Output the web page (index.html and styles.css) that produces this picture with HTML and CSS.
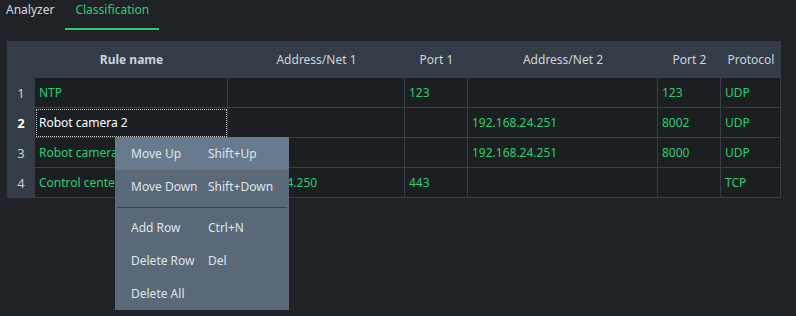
FILE: index.html
```html
<!DOCTYPE html>
<html lang="en">
<head>
    <meta charset="UTF-8">
    <meta name="viewport" content="width=device-width, initial-scale=1.0">
    <title>Classification</title>
    <link rel="stylesheet" href="styles.css">
</head>
<body>
    <div class="tabs">
        <div class="tab">Analyzer</div>
        <div class="tab active">Classification</div>
    </div>

    <div class="rules">
        <!-- header -->
        <div class="hd"></div>
        <div class="hd bold">Rule name</div>
        <div class="hd">Address/Net 1</div>
        <div class="hd">Port 1</div>
        <div class="hd">Address/Net 2</div>
        <div class="hd">Port 2</div>
        <div class="hd">Protocol</div>

        <div class="num">1</div>
        <div class="cell">NTP</div>
        <div class="cell"></div>
        <div class="cell">123</div>
        <div class="cell"></div>
        <div class="cell">123</div>
        <div class="cell">UDP</div>

        <div class="num current">2</div>
        <div class="cell focus">Robot camera 2</div>
        <div class="cell"></div>
        <div class="cell"></div>
        <div class="cell">192.168.24.251</div>
        <div class="cell">8002</div>
        <div class="cell">UDP</div>

        <div class="num">3</div>
        <div class="cell">Robot camera 1</div>
        <div class="cell"></div>
        <div class="cell"></div>
        <div class="cell">192.168.24.251</div>
        <div class="cell">8000</div>
        <div class="cell">UDP</div>

        <div class="num">4</div>
        <div class="cell">Control center</div>
        <div class="cell">192.168.24.250</div>
        <div class="cell">443</div>
        <div class="cell"></div>
        <div class="cell"></div>
        <div class="cell">TCP</div>
    </div>

    <!-- context menu -->
    <div class="menu">
        <div class="item hover"><span>Move Up</span><span>Shift+Up</span></div>
        <div class="item"><span>Move Down</span><span>Shift+Down</span></div>
        <div class="sep"></div>
        <div class="item"><span>Add Row</span><span>Ctrl+N</span></div>
        <div class="item"><span>Delete Row</span><span>Del</span></div>
        <div class="item"><span>Delete All</span><span></span></div>
    </div>
</body>
</html>
```

FILE: styles.css
```css
body {
    margin: 0;
    background: #1f2327;
    color: #d4dae0;
    font-family: "Noto Sans", "Open Sans", sans-serif;
    font-size: 12px;
    height: 316px;
    overflow: hidden;
}
/* tab bar */
.tabs {
    display: flex;
    gap: 5px;
    height: 30px;
}
.tab {
    padding: 0 6px;
    line-height: 20px;
    color: #d4dae0;
}
.tab.active {
    padding: 0 10px;
    color: #2ecc71;
    border-bottom: 2px solid #2ecc71;
    height: 28px;
    box-sizing: border-box;
    height: 30px;
}
/* rules table */
.rules {
    margin: 11px 0 0 7px;
    width: 774px;
    display: grid;
    grid-template-columns: 28px 193px 177px 63px 190px 63px 60px;
    grid-template-rows: 37px repeat(4, 30px);
    background: #1b1f22;
}
.hd {
    background: #343c47;
    color: #cdd4dc;
    display: flex;
    align-items: center;
    justify-content: center;
}
.hd.bold {
    font-weight: bold;
}
.num {
    background: #343c47;
    color: #c6ced6;
    display: flex;
    align-items: center;
    justify-content: center;
    font-size: 13px;
}
.num.current {
    color: #ffffff;
    font-weight: bold;
}
.cell {
    border-right: 1px solid #393f48;
    border-bottom: 1px solid #393f48;
    color: #2ecc71;
    padding: 0 4px;
    display: flex;
    align-items: center;
    white-space: nowrap;
    overflow: hidden;
}
.cell.focus {
    color: #ffffff;
    outline: 1px dotted #c8c8c8;
    outline-offset: -2px;
}
/* popup menu */
.menu {
    position: absolute;
    left: 115px;
    top: 137px;
    width: 174px;
    background: #5a6877;
    color: #dfe5ec;
}
.item {
    display: grid;
    grid-template-columns: 77px auto;
    height: 33px;
    align-items: center;
    padding-left: 16px;
}
.item.hover {
    background: #687a8d;
}
.sep {
    height: 8px;
    display: flex;
    align-items: center;
    padding: 0 2px;
}
.sep::after {
    content: "";
    flex: 1;
    height: 1px;
    background: #39434e;
}
```
